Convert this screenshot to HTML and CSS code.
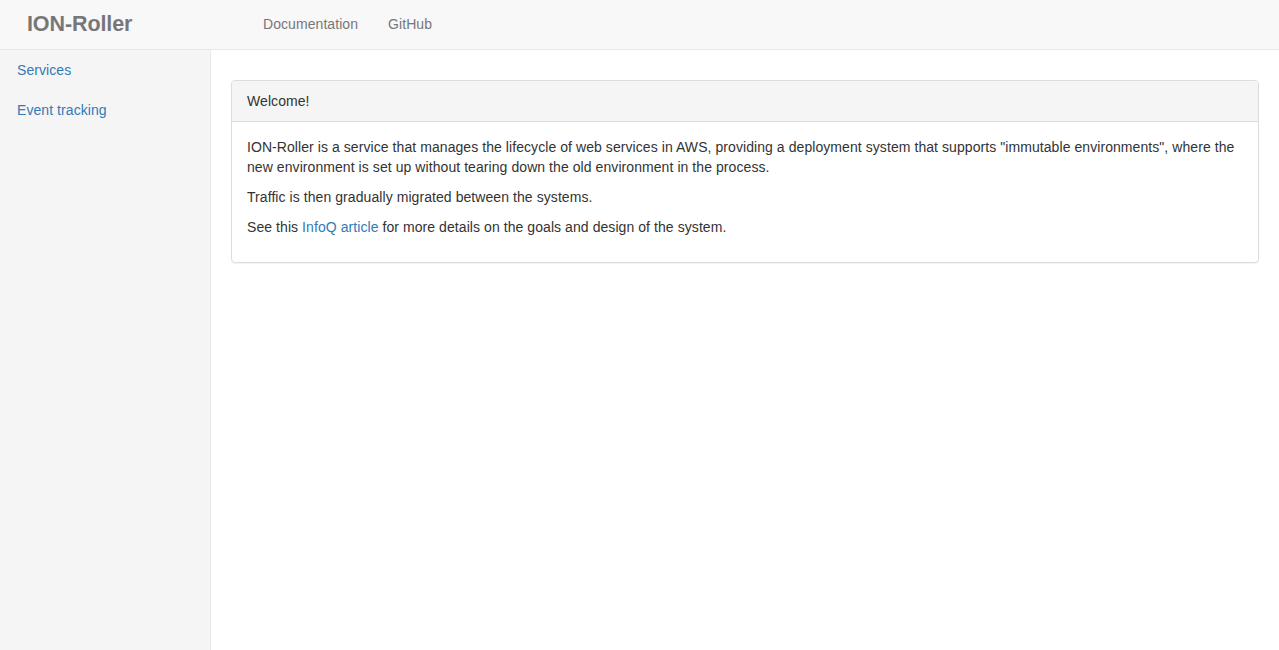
FILE: index.html
```html
<!DOCTYPE html>
<html>
<head>
<meta charset="utf-8">
<title>ION-Roller</title>
<link rel="stylesheet" href="styles.css">
</head>
<body>
<header class="navbar">
  <a class="brand" href="#">ION-Roller</a>
  <nav class="top-nav">
    <a href="#">Documentation</a>
    <a href="#">GitHub</a>
  </nav>
</header>
<div class="layout">
  <aside class="sidebar">
    <a href="#">Services</a>
    <a href="#">Event tracking</a>
  </aside>
  <main class="main">
    <section class="panel">
      <div class="panel-heading">Welcome!</div>
      <div class="panel-body">
        <p>ION-Roller is a service that manages the lifecycle of web services in AWS, providing a deployment system that supports "immutable environments", where the new environment is set up without tearing down the old environment in the process.</p>
        <p>Traffic is then gradually migrated between the systems.</p>
        <p>See this <a href="#">InfoQ article</a> for more details on the goals and design of the system.</p>
      </div>
    </section>
  </main>
</div>
</body>
</html>
```
FILE: styles.css
```css
html, body {
  margin: 0;
  padding: 0;
  height: 100%;
}
body {
  font-family: "Liberation Sans", Arial, Helvetica, sans-serif;
  font-size: 14px;
  line-height: 20px;
  color: #333;
  background: #fff;
  display: flex;
  flex-direction: column;
  letter-spacing: 0.07px;
}
a {
  text-decoration: none;
  color: #337ab7;
}
.navbar {
  height: 49px;
  background: #f8f8f8;
  border-bottom: 1px solid #e7e7e7;
  display: flex;
  align-items: center;
  flex-shrink: 0;
}
.brand {
  color: #777;
  font-weight: bold;
  font-size: 21.5px;
  padding-left: 27px;
  width: 263px;
  flex-shrink: 0;
  box-sizing: border-box;
  line-height: 49px;
  letter-spacing: -0.1px;
}
.top-nav {
  display: flex;
  gap: 30px;
}
.top-nav a {
  color: #777;
  line-height: 49px;
}
.layout {
  flex: 1;
  display: flex;
}
.sidebar {
  width: 210px;
  background: #f5f5f5;
  border-right: 1px solid #eaeaea;
  display: flex;
  flex-direction: column;
  flex-shrink: 0;
}
.sidebar a {
  padding: 10px 17px;
}
.main {
  flex: 1;
  padding: 30px 20px 20px 20px;
}
.panel {
  border: 1px solid #ddd;
  border-radius: 4px;
  box-shadow: 0 1px 1px rgba(0,0,0,0.05);
}
.panel-heading {
  background: #f5f5f5;
  border-bottom: 1px solid #ddd;
  border-radius: 3px 3px 0 0;
  padding: 10px 15px;
  color: #333;
}
.panel-body {
  padding: 15px;
}
.panel-body p {
  margin: 0 0 10px;
}
```
